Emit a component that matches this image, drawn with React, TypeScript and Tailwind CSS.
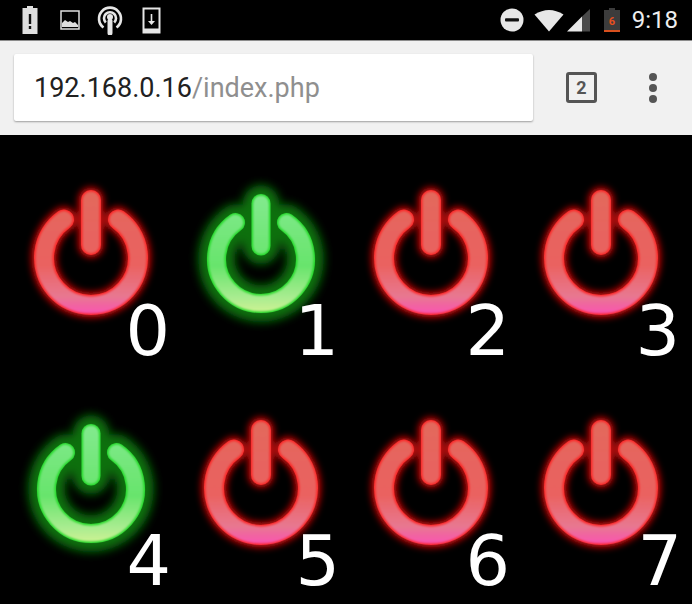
import React from 'react';

type Power = { n: number; on: boolean; cy: number; digitRight: string };

const powers: Power[] = [
  { n: 0, on: false, cy: 115, digitRight: 'right-[6px]' },
  { n: 1, on: true, cy: 116, digitRight: 'right-[7px]' },
  { n: 2, on: false, cy: 115, digitRight: 'right-[6px]' },
  { n: 3, on: false, cy: 115, digitRight: 'right-[6px]' },
  { n: 4, on: true, cy: 116, digitRight: 'right-[5px]' },
  { n: 5, on: false, cy: 115, digitRight: 'right-[6px]' },
  { n: 6, on: false, cy: 115, digitRight: 'right-[6px]' },
  { n: 7, on: false, cy: 115, digitRight: 'right-[4px]' },
];

const PowerIcon = ({ id, on, cy }: { id: string; on: boolean; cy: number }) => {
  const cx = 85;
  const r = on ? 44.5 : 47;
  const sw = on ? 19 : 20;
  const ex = r * 0.574;
  const ey = r * 0.819;
  const top = on ? cy - 55.5 : cy - 58;
  const arc = `M${cx - ex} ${cy - ey}A${r} ${r} 0 1 0 ${cx + ex} ${cy - ey}`;
  const stem = `M${cx} ${top}V${cy - 13}`;
  const shape = (
    <>
      <path d={arc} />
      <path d={stem} />
    </>
  );
  return (
    <svg width="170" height="230" viewBox="0 0 170 230" className="block">
      <defs>
        <linearGradient id={`${id}-g`} gradientUnits="userSpaceOnUse" x1="0" x2="0" y1={cy - 68} y2={cy + 57}>
          {on ? (
            <>
              <stop offset="0" stopColor="#84ea90" />
              <stop offset="0.6" stopColor="#68e46c" />
              <stop offset="0.85" stopColor="#a8ec90" />
              <stop offset="1" stopColor="#d8f494" />
            </>
          ) : (
            <>
              <stop offset="0" stopColor="#e2685c" />
              <stop offset="0.6" stopColor="#ea6260" />
              <stop offset="0.85" stopColor="#e87890" />
              <stop offset="1" stopColor="#fa50b4" />
            </>
          )}
        </linearGradient>
        <filter id={`${id}-wide`} x="-40%" y="-40%" width="180%" height="180%">
          <feGaussianBlur stdDeviation={on ? 5 : 3.5} />
        </filter>
        <filter id={`${id}-edge`} x="-20%" y="-20%" width="140%" height="140%">
          <feGaussianBlur stdDeviation="0.5" />
        </filter>
        <filter id={`${id}-soft`} x="-20%" y="-20%" width="140%" height="140%">
          <feGaussianBlur stdDeviation="1.1" />
        </filter>
      </defs>
      <g fill="none" strokeLinecap="round">
        <g filter={`url(#${id}-wide)`} stroke={on ? '#07700c' : '#d80a0a'} strokeWidth={on ? sw + 18 : sw + 5}>
          {shape}
        </g>
        <g filter={`url(#${id}-edge)`} stroke={on ? '#20d828' : '#fc2626'} strokeWidth={sw}>
          {shape}
        </g>
        <g filter={`url(#${id}-soft)`} stroke={`url(#${id}-g)`} strokeWidth={sw - 3}>
          {shape}
        </g>
      </g>
    </svg>
  );
};

const StatusLeft = () => (
  <div className="flex items-center">
    <svg width="18" height="30" viewBox="0 0 18 30" className="ml-[21px] block">
      <path d="M6 1h6v2h4.500v26h-15V3H6z" fill="#dedede" />
      <path d="M7.800 9h2.400v10H7.800zM7.800 21h2.400v3H7.800z" fill="#111" />
    </svg>
    <svg width="20" height="20" viewBox="0 0 20 20" className="ml-[21px] block">
      <rect x="1" y="1" width="18" height="18" fill="none" stroke="#dedede" strokeWidth="1.500" />
      <path d="M2 17v-4l3-3 3 2 2-1 3 2 2-1 3 3v2z" fill="#dedede" />
    </svg>
    <svg width="26" height="30" viewBox="0 0 26 30" className="ml-[17px] block">
      <g fill="none" stroke="#e6e6e6" strokeWidth="2.600" strokeLinecap="butt">
        <path d="M6.500 22.500A11 11 0 1 1 19.500 22.500" />
        <path d="M8.800 17.500A6 6 0 1 1 17.200 17.500" />
      </g>
      <circle cx="13" cy="12" r="3" fill="#e6e6e6" />
      <path d="M13 16v12" stroke="#e6e6e6" strokeWidth="5" strokeLinecap="round" />
    </svg>
    <svg width="19" height="27" viewBox="0 0 19 27" className="ml-[19px] block">
      <path d="M0.500 0.500h18v26h-18z" fill="#e6e6e6" />
      <path d="M2.500 2.500h14v19h-14z" fill="#000" />
      <path d="M8.700 7h1.600v7h2.700l-3.500 4-3.500-4h2.700z" fill="#e6e6e6" />
    </svg>
  </div>
);

const StatusRight = () => (
  <div className="flex items-center">
    <svg width="24" height="24" viewBox="0 0 24 24" className="block">
      <circle cx="12" cy="12" r="11.500" fill="#e8e8e8" />
      <rect x="5" y="10.200" width="14" height="3.400" rx="1" fill="#111" />
    </svg>
    <svg width="30" height="23" viewBox="0 0 30 23" className="ml-[10px] block">
      <path d="M15 22.500L0.500 5.500Q15-3.500 29.500 5.500z" fill="#e8e8e8" />
    </svg>
    <svg width="23" height="23" viewBox="0 0 23 23" className="ml-[3px] block">
      <path d="M0 22.500L15 7.500V22.500z" fill="#e8e8e8" />
      <path d="M15 7.500L23 0V22.500H15z" fill="#4a4a4a" />
    </svg>
    <svg width="16" height="24" viewBox="0 0 16 24" className="ml-[14px] block">
      <path d="M5 0h6v2h5v22H0V2h5z" fill="#3c3c3c" />
      <rect x="0" y="22" width="16" height="2" fill="#d8501e" />
      <text x="8" y="17" textAnchor="middle" fontSize="11" fontWeight="700" fill="#e8501e" className="font-['Roboto',sans-serif]">6</text>
    </svg>
    <span className="ml-[12px] mr-[14px] font-['Roboto',sans-serif] text-[24px] leading-none text-[#eeeeee]">9:18</span>
  </div>
);

export default function App() {
  return (
    <div className="flex h-[604px] w-[692px] flex-col overflow-hidden bg-black">
      <div className="flex h-[40px] items-center justify-between">
        <StatusLeft />
        <StatusRight />
      </div>

      <div className="flex h-[95px] items-center border-t border-[#8c8c8c] bg-[#f1f1f1] pb-[1px] pl-[14px]">
        <div className="flex h-[67px] w-[519px] items-center rounded-[2px] bg-white pl-[20px] pt-[2px] shadow-[0_1px_2px_rgba(0,0,0,0.35)]">
          <span className="font-['Roboto',sans-serif] text-[27px] text-[#212121]">
            192.168.0.16<span className="text-[#8f8f8f]">/index.php</span>
          </span>
        </div>
        <div className="ml-[33px] flex h-[31px] w-[31px] items-center justify-center rounded-[3px] border-[3px] border-[#555555] font-['Roboto',sans-serif] text-[18px] font-bold text-[#555555]">
          2
        </div>
        <div className="ml-[52px] flex flex-col gap-[3px]">
          <span className="h-[8px] w-[8px] rounded-full bg-[#555555]" />
          <span className="h-[8px] w-[8px] rounded-full bg-[#555555]" />
          <span className="h-[8px] w-[8px] rounded-full bg-[#555555]" />
        </div>
      </div>

      <div className="grid grid-cols-[repeat(4,170px)] grid-rows-[repeat(2,230px)] pl-[6px] pt-[8px]">
        {powers.map((p) => (
          <div key={p.n} className="relative h-[230px] w-[170px]">
            <PowerIcon id={`p${p.n}`} on={p.on} cy={p.cy} />
            <span className={`absolute bottom-[7px] ${p.digitRight} font-['DejaVu_Sans',sans-serif] text-[70px] leading-none text-white`}>
              {p.n}
            </span>
          </div>
        ))}
      </div>
    </div>
  );
}
